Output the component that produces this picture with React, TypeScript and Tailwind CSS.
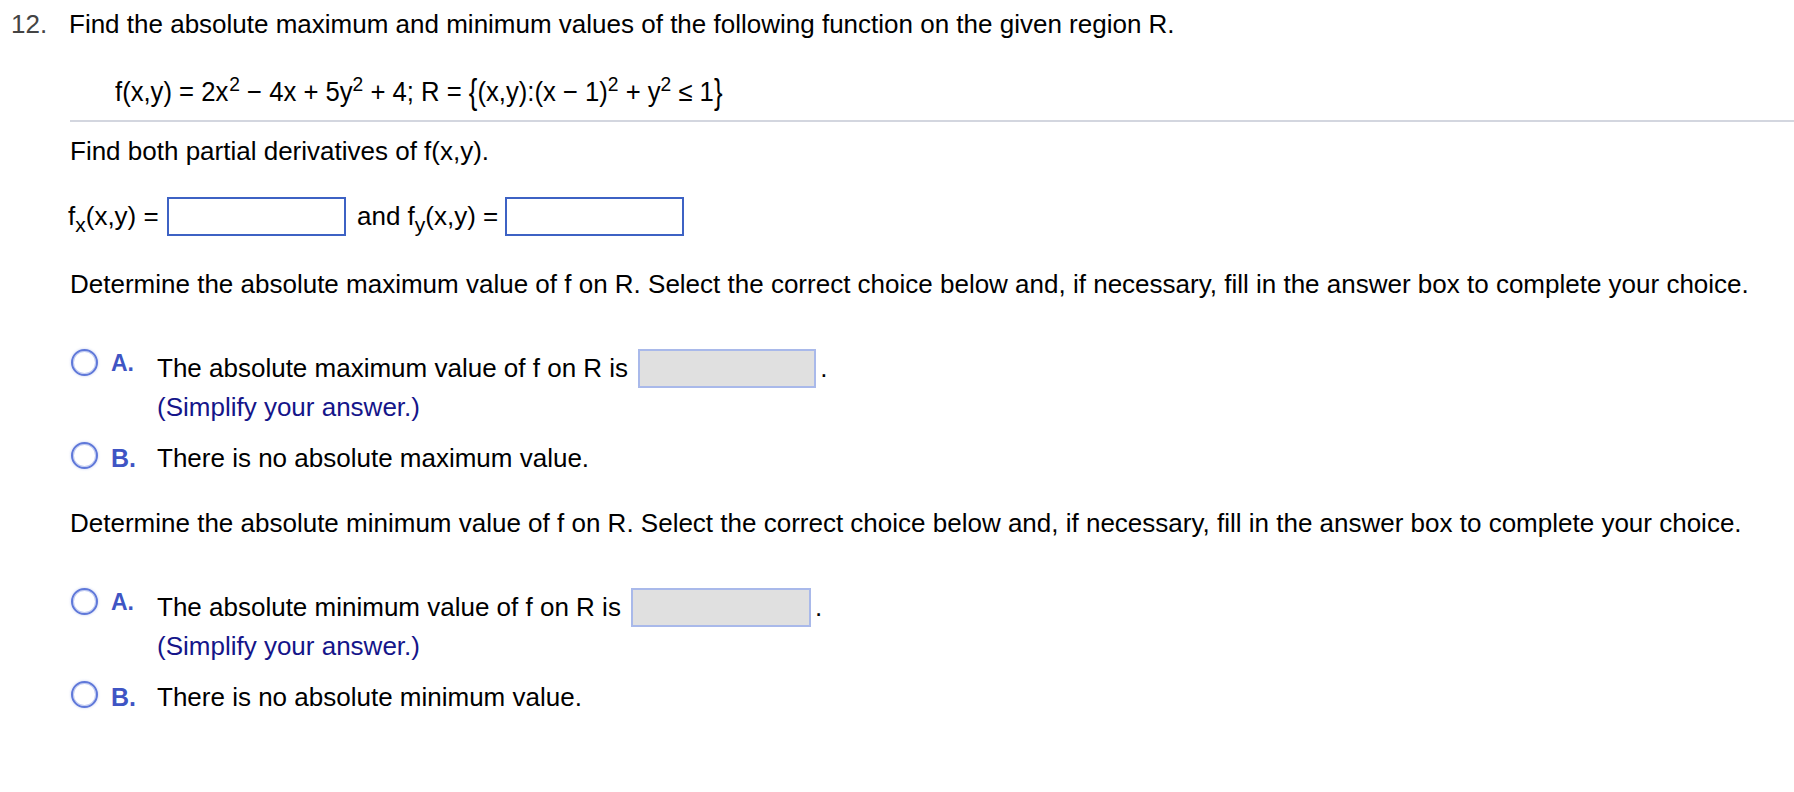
import React from "react";

const Radio = () => (
  <div className="w-[27px] h-[27px] rounded-full border-[2.5px] border-[#5f78d9] bg-white shadow-[inset_0_0_0_1px_#c3cdf2,0_0_2px_1px_rgba(120,140,220,0.2)]" />
);

const Box = ({ w, gray }: { w: string; gray?: boolean }) =>
  gray ? (
    <div className={`${w} h-[39px] bg-[#e0e0e0] border-2 border-[#a9b9ea]`} />
  ) : (
    <div className={`${w} h-[39px] bg-white border-2 border-[#3d62c4]`} />
  );

const Brace = ({ c }: { c: string }) => (
  <span className="inline-block scale-y-[1.3] leading-[20px] text-[27px]">{c}</span>
);

const Section = ({
  kind,
  boxW,
  top,
}: {
  kind: "maximum" | "minimum";
  boxW: string;
  top: string;
}) => (
  <>
    <div className={`ml-[70px] ${top} leading-[29px] whitespace-nowrap`}>
      Determine the absolute {kind} value of f on R. Select the correct choice below and, if necessary, fill in the answer box to complete your choice.
    </div>
    <div className="mt-[50px] flex items-start ml-[71px]">
      <div className="w-[40px]">
        <Radio />
      </div>
      <div className="w-[46px] pt-[3px] text-[23px] leading-[23px] font-bold text-[#3f55c4]">A.</div>
      <div>
        <div className="flex items-center h-[39px] whitespace-nowrap leading-[29px]">
          <span>The absolute {kind} value of f on R is</span>
          <span className="ml-[10px]">
            <Box w={boxW} gray />
          </span>
          <span className="ml-[4px]">.</span>
        </div>
        <div className="mt-[5px] leading-[29px] text-[#15158a]">(Simplify your answer.)</div>
      </div>
    </div>
    <div className="mt-[22px] flex items-start ml-[71px]">
      <div className="w-[40px] -mt-[2px]">
        <Radio />
      </div>
      <div className="w-[46px] text-[25px] leading-[29px] font-bold text-[#3f55c4]">B.</div>
      <div className="leading-[29px] whitespace-nowrap">There is no absolute {kind} value.</div>
    </div>
  </>
);

export default function App() {
  return (
    <div className="w-[1794px] h-[792px] bg-white text-black text-[26px] font-['Liberation_Sans',Arial,sans-serif] overflow-hidden">
      <div className="pt-[10px] flex leading-[29px] whitespace-nowrap">
        <span className="w-[69px] pl-[11px] text-[#444]">12.</span>
        <span>Find the absolute maximum and minimum values of the following function on the given region R.</span>
      </div>
      <div className="mt-[39px] ml-[115px] leading-[29px] h-[29px] whitespace-nowrap">
        <span className="inline-block origin-left scale-x-[0.95] text-[27px]">
          f(x,y) = 2x<sup className="ml-[1px]">2</sup> − 4x + 5y<sup>2</sup> + 4; R = <Brace c="{" />(x,y):(x − 1)<sup>2</sup> + y<sup>2</sup> ≤ 1<Brace c="}" />
        </span>
      </div>
      <div className="mt-[13px] ml-[70px] h-[2px] bg-[#d3d6df]" />
      <div className="mt-[15px] ml-[70px] leading-[29px]">Find both partial derivatives of f(x,y).</div>
      <div className="mt-[31px] ml-[68px] flex items-center h-[39px] leading-[29px] whitespace-nowrap">
        <span className="w-[99px]">
          f<sub className="text-[21px] -bottom-[0.35em]">x</sub>(x,y) =
        </span>
        <Box w="w-[179px]" />
        <span className="ml-[11px] w-[148px]">
          and f<sub className="text-[21px] -bottom-[0.35em]">y</sub>(x,y) =
        </span>
        <Box w="w-[179px]" />
      </div>
      <Section kind="maximum" boxW="w-[178px]" top="mt-[34px]" />
      <Section kind="minimum" boxW="w-[180px]" top="mt-[36px]" />
    </div>
  );
}
